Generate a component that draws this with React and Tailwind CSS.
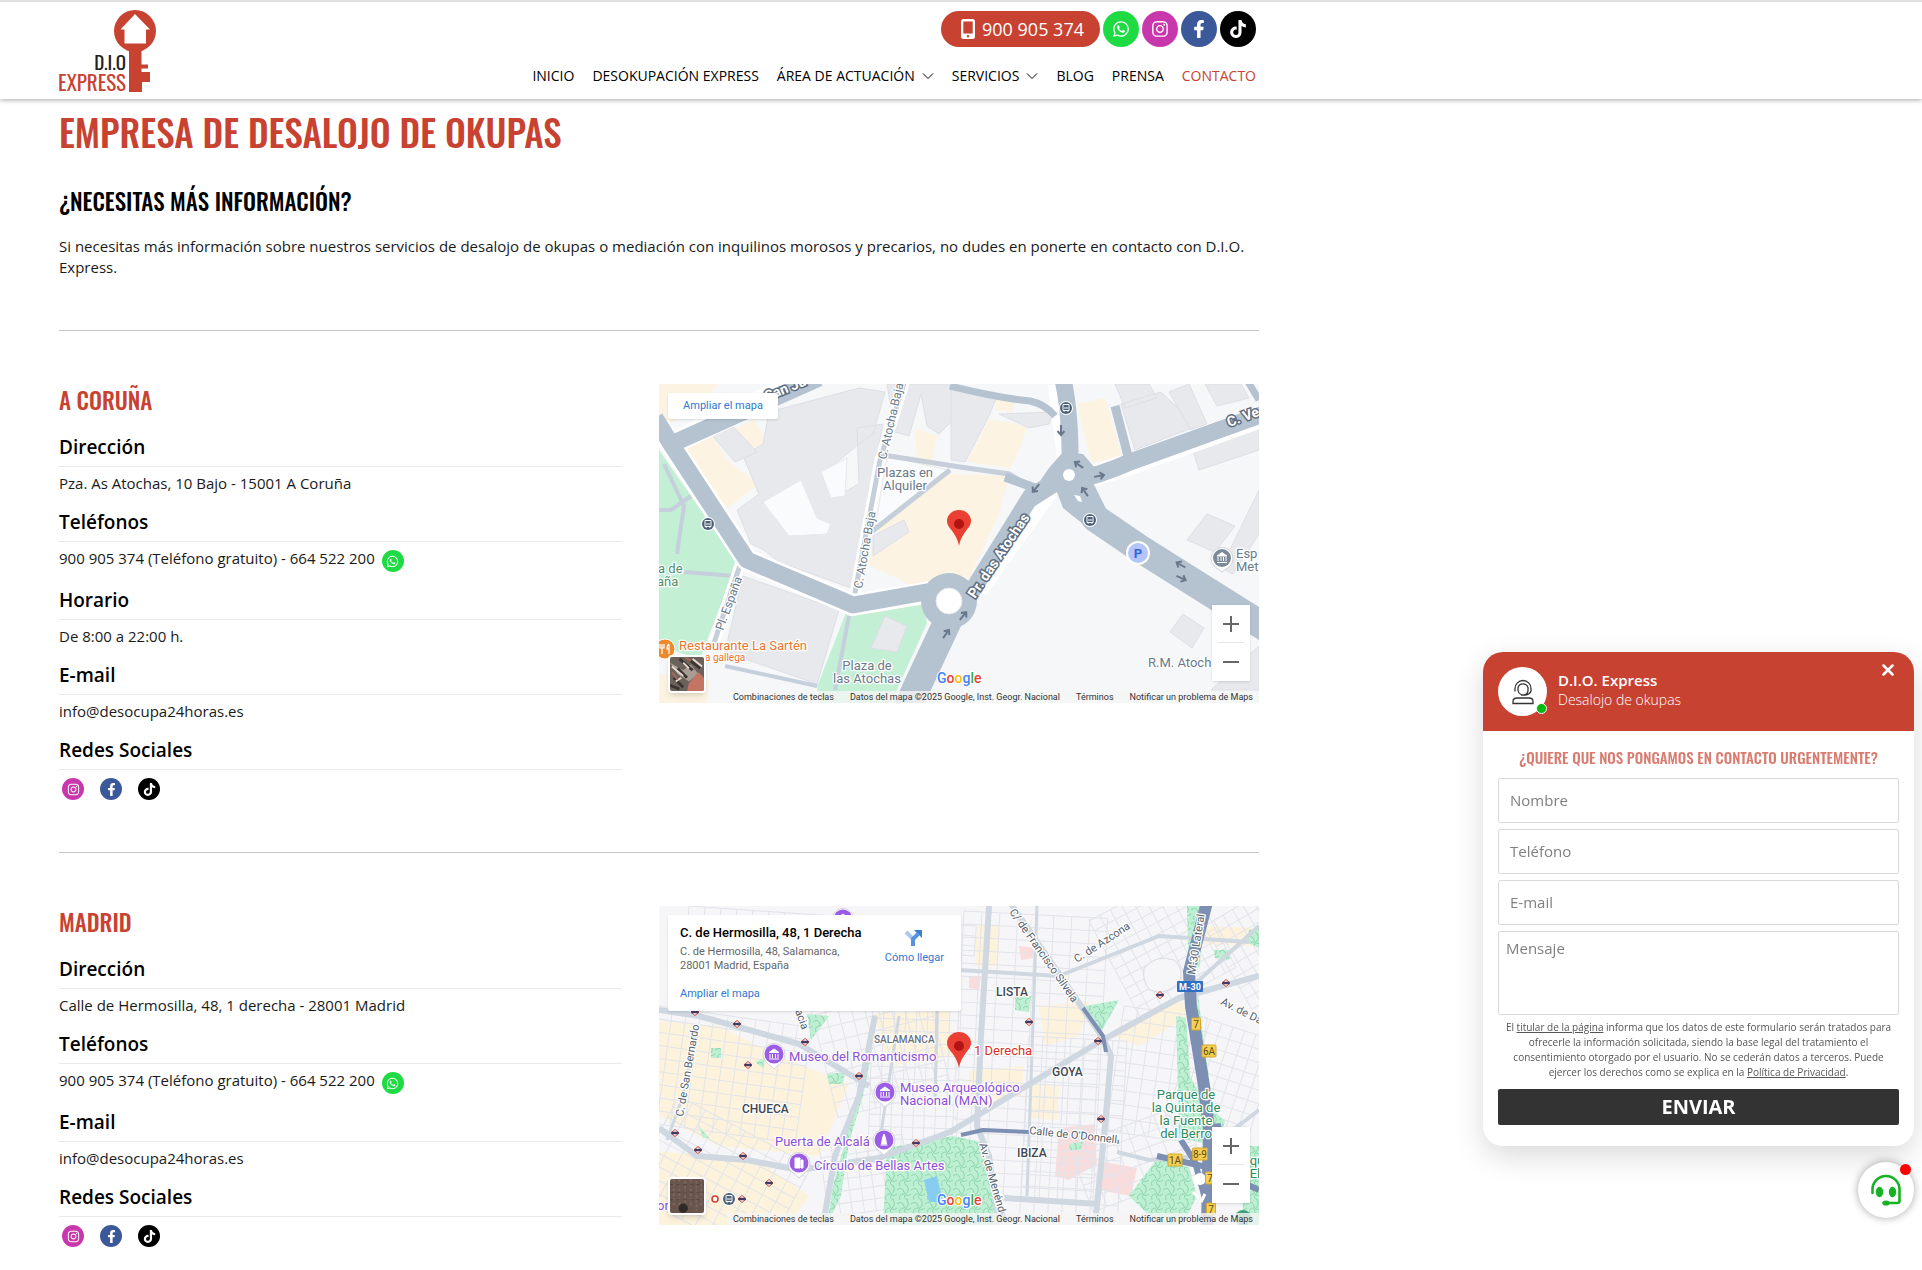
import React from "react";
import { FaWhatsapp, FaInstagram, FaFacebookF, FaTiktok } from "react-icons/fa";

const brands = {
  whatsapp: { Icon: FaWhatsapp, label: "WhatsApp", bg: "bg-[#1fdb43]" },
  instagram: { Icon: FaInstagram, label: "Instagram", bg: "bg-[#c837ab]" },
  facebook: { Icon: FaFacebookF, label: "Facebook", bg: "bg-[#3b5998]" },
  tiktok: { Icon: FaTiktok, label: "TikTok", bg: "bg-black" },
};

function Social({ name, small }) {
  const { Icon, label, bg } = brands[name];
  return (
    <a
      href="#"
      aria-label={label}
      className={`flex items-center justify-center rounded-full text-white ${bg} ${small ? "size-[22px] text-[13px]" : "size-9 text-lg"}`}
    >
      <Icon />
    </a>
  );
}

function Logo() {
  return (
    <svg viewBox="0 0 98 84" className="h-[84px] w-[98px]" role="img" aria-label="D.I.O Express">
      <circle cx="76" cy="22" r="21" fill="#c84232" />
      <path d="M76 5 61.5 20.5h4V34.500h21.500V20.500h4z" fill="#fff" />
      <path d="M70 40h12.500v15.500H89v4h-6.500v3.500H91v10h-8v10H70z" fill="#c84232" />
      <text x="67" y="61" textAnchor="end" fontSize="19" fontFamily="Oswald" fill="#222">D.I.O</text>
      <text x="67" y="82" textAnchor="end" fontSize="21" fontFamily="Oswald" fill="#c84232">EXPRESS</text>
    </svg>
  );
}

function Chevron() {
  return (
    <svg viewBox="0 0 12 8" className="h-2 w-3" fill="none" stroke="currentColor">
      <path d="M1 1.500 6 6.500 11 1.500" />
    </svg>
  );
}

const nav = [
  { label: "INICIO" },
  { label: "DESOKUPACIÓN EXPRESS" },
  { label: "ÁREA DE ACTUACIÓN", menu: true },
  { label: "SERVICIOS", menu: true },
  { label: "BLOG" },
  { label: "PRENSA" },
  { label: "CONTACTO", active: true },
];

function Header() {
  return (
    <header className="relative border-t-2 border-[#dfdfdf] bg-white shadow-[0_1px_5px_rgba(0,0,0,0.35)]">
      <div className="ml-[59px] flex max-w-[1200px] justify-between pt-[7px] pb-[6px]">
        <a href="#"><Logo /></a>
        <div className="flex flex-col items-end pt-0.5 pr-[3px]">
          <div className="flex gap-[3px]">
            <a href="tel:900905374" className="flex h-9 items-center gap-[7px] rounded-full bg-[#c84232] pr-4 pl-5 text-lg text-white">
              <svg viewBox="0 0 14 20" className="h-5 w-3.5">
                <path fillRule="evenodd" fill="#fff" d="M2.500 0h9A2.500 2.500 0 0 1 14 2.500v15a2.500 2.500 0 0 1-2.500 2.500h-9A2.500 2.500 0 0 1 0 17.500v-15A2.500 2.500 0 0 1 2.500 0zM2.300 2.600v12h9.400v-12zM7 16a1.200 1.200 0 1 0 0 2.400A1.200 1.200 0 0 0 7 16z" />
              </svg>
              900 905 374
            </a>
            <Social name="whatsapp" />
            <Social name="instagram" />
            <Social name="facebook" />
            <Social name="tiktok" />
          </div>
          <nav className="mt-[18px] flex gap-[18px] text-sm leading-[22px] text-black">
            {nav.map((n) => (
              <a key={n.label} href="#" className={`flex items-center gap-[7px] ${n.active ? "text-[#c84232]" : ""}`}>
                {n.label}
                {n.menu && <Chevron />}
              </a>
            ))}
          </nav>
        </div>
      </div>
    </header>
  );
}

function Field({ title, children }) {
  return (
    <div className="mb-4">
      <h4 className="border-b border-[#e9e9e9] pb-[7px] text-[19px] leading-6 font-semibold">{title}</h4>
      <div className="pt-1.5 text-[15px] leading-[21px] text-[#1a1a1a]">{children}</div>
    </div>
  );
}

function Phones() {
  return (
    <div className="flex h-[24px] items-start gap-[7px]">
      <span>900 905 374 (Teléfono gratuito) - 664 522 200</span>
      <div className="pt-0.5"><Social name="whatsapp" small /></div>
    </div>
  );
}

function Office({ city, address, hours, map }) {
  return (
    <section className="grid grid-cols-2 border-t border-[#c4c4c4] pt-[53px] pb-9">
      <div className="pr-[37px]">
        <h3 className="mb-[18px] font-['Oswald'] text-[23px] leading-[33px] font-medium text-[#c84232]">{city}</h3>
        <Field title="Dirección">{address}</Field>
        <Field title="Teléfonos"><Phones /></Field>
        {hours && <Field title="Horario">{hours}</Field>}
        <Field title="E-mail">info@desocupa24horas.es</Field>
        <Field title="Redes Sociales">
          <div className="flex gap-4 pt-0.5 pl-[3px]">
            <Social name="instagram" small />
            <Social name="facebook" small />
            <Social name="tiktok" small />
          </div>
        </Field>
      </div>
      {map}
    </section>
  );
}

/* ---------- Maps ---------- */

function Pin() {
  return (
    <g>
      <path d="M300 162c-1.500-7-3-9.500-6.500-14.500-3-4-5.500-6.500-5.500-10.500a12 11 0 0 1 24 0c0 4-2.500 6.500-5.500 10.500-3.500 5-5 7.500-6.500 14.500z" fill="#ea3f33" />
      <circle cx="300" cy="140" r="5" fill="#b31412" />
    </g>
  );
}

function GoogleMark() {
  return (
    <text x="278" y="299" fontSize="14" fontWeight="500" stroke="#fff" strokeWidth="2" paintOrder="stroke">
      <tspan fill="#4285f4">G</tspan>
      <tspan fill="#ea4335">o</tspan>
      <tspan fill="#fbbc04">o</tspan>
      <tspan fill="#4285f4">g</tspan>
      <tspan fill="#34a853">l</tspan>
      <tspan fill="#ea4335">e</tspan>
    </text>
  );
}

function Bus({ x, y }) {
  return (
    <g transform={`translate(${x} ${y})`}>
      <circle r="7" fill="#fff" />
      <circle r="6" fill="#4d6079" />
      <path d="M-3-3.500h6v6h-6zM-2.500 3h1.500M1 3h1.500M-2 0h4" fill="none" stroke="#fff" />
    </g>
  );
}

function Arrow({ x, y, r }) {
  return <path transform={`translate(${x} ${y}) rotate(${r})`} d="M-5 0H4M1-3.500 5 0 1 3.500" fill="none" stroke="#68778a" strokeWidth="2" />;
}

function Halo({ children, ...p }) {
  return (
    <text stroke="#fff" strokeWidth="2.500" strokeLinejoin="round" paintOrder="stroke" {...p}>
      {children}
    </text>
  );
}

function CorunaDrawing() {
  return (
    <svg viewBox="0 0 600 319" preserveAspectRatio="xMidYMid slice" className="block h-full w-full" fontFamily="Roboto" fontSize="13">
      <rect width="600" height="319" fill="#f6f7f9" />
      <g fill="#c3efd5">
        <path d="M0 66 78 178 41 275 0 262z" />
        <path d="M188 226 262 214 268 239 232 319H160L158 303z" />
      </g>
      <g fill="#fdf3e2">
        <path d="M0 0H60L40 20 10 40 0 35zM20 65 52 50 70 78 100 100 60 130z" />
        <path d="M240 88 350 92 340 130 310 195 262 206 208 180z" />
        <path d="M418 20 446 14 464 76 432 78z" />
        <path d="M330 35 368 42 362 62 352 84 308 78zM336 14 356 16 354 28 336 26zM256 44 278 52 272 84 258 76z" />
        <path d="M0 290 50 296 48 319H0zM65 50 95 36 110 60 84 66z" />
      </g>
      <g fill="#e7e9ed" stroke="#dcdfe5">
        <path d="M110 28 200 4 226 8 214 50 200 60 166 88 178 112 200 100 198 44 224 40 192 204 120 178 105 166 92 160 78 126 100 110 84 72 104 60z" />
        <path d="M50 48 70 38 98 68 76 78z" />
        <path d="M84 192 180 226 158 300 66 268z" />
        <path d="M228 0H290L300 30 280 50 268 42 262 10 250 52 236 48z" />
        <path d="M292 2 338 12 330 32 306 78 292 76z" />
        <path d="M340 30 394 28 390 40 370 44z" />
        <path d="M462 20 502 8 538 42 476 66zM456 0H490L498 14 466 24z" />
        <path d="M510 8 530 0 548 40 532 46zM546 0H582L590 14 558 22zM532 60 600 36 600 66 540 86z" />
        <path d="M548 130 576 142 556 168 528 156zM600 106 600 150 574 190 562 184z" />
        <path d="M524 230 545 244 533 264 511 248z" />
        <path d="M214 152 245 136 250 148 214 172zM226 232 248 242 238 268 212 264z" />
        <path d="M600 262V306H552z" />
      </g>
      <g fill="#fafbfc" stroke="#e6e8ec">
        <path d="M104 118 142 96 158 134 172 140 168 150 130 152z" />
        <path d="M162 88 188 74 186 112 172 114z" />
        <path d="M228 72 288 86 216 144z" />
      </g>
      <g fill="none" stroke="#c6cfdc" strokeWidth="4">
        <path d="M5 80 25 122 18 170M0 126H12L32 112M25 188 76 192M190 232 176 306M66 282 158 302" />
      </g>
      <g fill="none" stroke="#fff" strokeWidth="11">
        <path d="M246-4 221 76 195 214M82 178 54 262" />
      </g>
      <g fill="none" stroke="#c5ced9" strokeWidth="5">
        <path d="M246-4 221 76 195 214M82 178 54 262M224 71 301 83 350 90 374 104M291 86 211 149" />
      </g>
      <g fill="none" stroke="#fff" strokeLinejoin="round" strokeWidth="22">
        <path d="M0 42 12 60 88 176 194 221 290 205M12 60 150-6" />
        <path d="M400 0 411 91M420 96 471 80 604 32M318 205 390 104" />
      </g>
      <g fill="none" stroke="#b5c2d0" strokeLinejoin="round" strokeWidth="17">
        <path d="M-4 34 12 60 88 176 194 221 290 204M8 62 160-6" />
        <path d="M404-4Q412 30 411 91M415 96Q440 92 471 78L604 30M310 212 372 112 404 94" />
        <path d="M291 2Q340 14 371 17 386 20 396 32M588-4 600 16" strokeWidth="7" />
        <path d="M456 22 470 76M346 93 376 104" strokeWidth="9" />
        <path d="M418 98 436 134 480 164 620 252" strokeWidth="28" />
        <path d="M294 226 248 324" strokeWidth="28" />
      </g>
      <path d="M390 84 404 68 424 70 436 84 430 104 440 130 424 140 404 124 398 108 376 122 372 110z" fill="#b5c2d0" />
      <circle cx="290" cy="217" r="28" fill="#b5c2d0" />
      <circle cx="290" cy="217" r="13" fill="#fff" stroke="#e2e6eb" />
      <circle cx="410" cy="91" r="6" fill="#fff" />
      <path d="M415 111 421 112 423 118 419 117z" fill="#fff" />
      <Arrow x={402} y={46} r={90} />
      <Arrow x={420} y={81} r={215} />
      <Arrow x={440} y={92} r={-10} />
      <Arrow x={426} y={108} r={235} />
      <Arrow x={377} y={104} r={130} />
      <Arrow x={522} y={181} r={210} />
      <Arrow x={522} y={194} r={25} />
      <Arrow x={304} y={232} r={-50} />
      <Arrow x={287} y={250} r={-55} />
      <Bus x={49} y={140} />
      <Bus x={407} y={24} />
      <Bus x={431} y={136} />
      <circle cx="479" cy="169" r="12" fill="#fff" />
      <circle cx="479" cy="169" r="10" fill="#b3c5fb" />
      <text x="479" y="174" textAnchor="middle" fontWeight="700" fill="#3367d6">P</text>
      <g>
        <path d="M563 188 555 182a11 11 0 1 1 16 0z" fill="#fff" stroke="#cfd4da" />
        <circle cx="563" cy="174" r="9" fill="#7c8a97" />
        <path d="M558 172 563 168.500 568 172zM559 173v4M562 173v4M564.500 173v4M567 173v4M558 178.500h10" fill="#fff" stroke="#fff" />
      </g>
      <g fill="#6b7a89">
        <Halo x="246" y="93" textAnchor="middle">Plazas en</Halo>
        <Halo x="246" y="106" textAnchor="middle">Alquiler</Halo>
        <Halo x="208" y="286" textAnchor="middle">Plaza de</Halo>
        <Halo x="208" y="299" textAnchor="middle">las Atochas</Halo>
        <Halo x="577" y="174">Esp</Halo>
        <Halo x="577" y="187">Met</Halo>
        <Halo x="489" y="283">R.M. Atoch</Halo>
        <Halo transform="translate(227 76) rotate(-77)" fontSize="12">C. Atocha Baja</Halo>
        <Halo transform="translate(203 205) rotate(-80)" fontSize="12">C. Atocha Baja</Halo>
        <Halo transform="translate(64 247) rotate(-70)" fontSize="12">Pl. España</Halo>
      </g>
      <g fill="#4e8f6d">
        <Halo x="-1" y="189">a de</Halo>
        <Halo x="-2" y="202">aña</Halo>
      </g>
      <g fill="#fff">
        <text transform="translate(316 215) rotate(-56)" fontSize="14" fontWeight="700" stroke="#5d6c7f" strokeWidth="3" paintOrder="stroke">Pr. das Atochas</text>
        <text transform="translate(570 43) rotate(-20)" fontSize="14" fontWeight="700" stroke="#5d6c7f" strokeWidth="3" paintOrder="stroke">C. Ve</text>
        <text transform="translate(108 17) rotate(-22)" fontSize="14" fontWeight="700" stroke="#5d6c7f" strokeWidth="3" paintOrder="stroke">San Ju</text>
      </g>
      <circle cx="6" cy="265" r="10" fill="#ee8a2c" stroke="#fff" />
      <path d="M3 260v10M1 260v4h4v-4M10 260v10M10 260q-2 1-2 5h2" fill="none" stroke="#fff" strokeWidth="1.200" />
      <g fill="#e8762d">
        <Halo x="20" y="266">Restaurante La Sartén</Halo>
        <Halo x="46" y="277" fontSize="10">a gallega</Halo>
      </g>
      <Pin />
      <GoogleMark />
    </svg>
  );
}

function Poi({ x, y, kind = 0 }) {
  const glyphs = [
    "M-5-1.500 0-5 5-1.500zM-4 0v4M-1.500 0v4M1.500 0v4M4 0v4M-5 5H5",
    "M0-6-1.500-2-2.500 4H2.500L1.500-2zM-3.500 5h7",
    "M-4-5H1V5H-4zM2-3H4V5H2z",
  ];
  return (
    <g transform={`translate(${x} ${y})`}>
      <path d="M0 15-8 8a11 11 0 1 1 16 0z" fill="#fff" stroke="#d5d2e0" />
      <circle r="9.500" fill="#9b5de5" />
      <path d={glyphs[kind]} fill="#fff" stroke="#fff" />
    </g>
  );
}

function Metro({ x, y }) {
  return (
    <g transform={`translate(${x} ${y})`}>
      <path d="M0-3.500 4 0 0 3.500-4 0z" fill="#fff" stroke="#d23f31" />
      <path d="M-3.500 0h7" stroke="#3f3a63" strokeWidth="2.500" />
    </g>
  );
}

function Exit({ x, y, w = 9, children }) {
  return (
    <g>
      <rect x={x - w / 2} y={y - 6} width={w} height="12" rx="1" fill="#f7cf52" stroke="#d5a92b" />
      <text x={x} y={y + 4} fontSize="10" textAnchor="middle" fill="#5a4a1a">{children}</text>
    </g>
  );
}

/* Fine street grids, each one [x, y, columns, rows, column step, row step, rotation]. */
const grids = [
  [0, 100, 11, 9, 14, 13, 8],
  [150, 95, 9, 8, 13, 15, -14],
  [20, 190, 10, 9, 15, 12, 28],
  [214, 100, 8, 13, 11, 12, 2],
  [305, 5, 8, 22, 18, 13, 3],
  [370, 130, 7, 12, 14, 15, 3],
  [430, 15, 9, 10, 12, 11, -28],
  [465, 100, 6, 9, 14, 14, 8],
  [545, 20, 6, 8, 11, 12, -30],
  [540, 110, 7, 9, 12, 13, 18],
  [30, 0, 18, 3, 16, 10, 4],
  [160, 240, 7, 6, 12, 12, -8],
  [410, 240, 8, 5, 15, 14, -20],
];

function gridPath([, , cols, rows, dx, dy]) {
  let d = "";
  for (let i = 0; i <= cols; i++) d += `M${i * dx} 0V${rows * dy}`;
  for (let j = 0; j <= rows; j++) d += `M0 ${j * dy}H${cols * dx}`;
  return d;
}

function MadridDrawing() {
  return (
    <svg viewBox="0 0 600 319" preserveAspectRatio="xMidYMid slice" className="block h-full w-full" fontFamily="Roboto" fontSize="13">
      <defs>
        <pattern id="park" width="14" height="14" patternUnits="userSpaceOnUse">
          <rect width="14" height="14" fill="#bdf0d2" />
          <path d="M0 4q5-4 7 2t7 2M3 14q-2-6 4-6M10 0q3 4-1 8t2 6" fill="none" stroke="#8ed3ae" />
        </pattern>
      </defs>
      <rect width="600" height="319" fill="#f6f6f9" />
      <g fill="#fdf2dc">
        <path d="M0 115 60 120 120 150 190 178 160 250 60 240 0 210z" />
        <path d="M0 245 100 255 150 290 130 319H0zM70 180 130 170 150 220 90 225z" />
        <path d="M215 108 290 105 294 150 230 160zM310 165 365 160 362 190 310 198zM318 20 340 18 338 60 316 60z" />
        <path d="M380 100 430 96 420 130 386 140zM455 130 520 90 530 110 480 140zM540 20 600 22 595 40 545 38zM370 178 400 180 398 214 372 212z" />
      </g>
      <g fill="#fbdcdc">
        <path d="M400 222 435 218 438 258 410 274 396 270zM440 255 478 262 472 290 440 284zM360 40 376 42 374 52 362 54zM310 70 322 70 320 84 310 82z" />
      </g>
      {grids.map((g, i) => (
        <g key={i} transform={`translate(${g[0]} ${g[1]}) rotate(${g[6]})`}>
          <path d={gridPath(g)} fill="none" stroke="#e2e4ea" />
        </g>
      ))}
      <path d="M485 62q12-14 30-8 12 10 4 24-14 12-28 6-8-8-6-22z" fill="#f6f6f9" stroke="#d8dce3" />
      <g fill="url(#park)">
        <path d="M228 242 294 230 322 236 340 319H224z" />
        <path d="M426 100 460 94 442 126z" />
        <path d="M517 110 527 112 531 170 545 196 566 215 560 240 520 232z" />
        <path d="M590 24 600 22V42L588 36zM528 0H543L541 60 530 70zM538 80 544 130 550 170 540 150z" />
        <path d="M214 140 204 190 190 236 182 290 168 319 174 280 190 220 202 170z" />
        <path d="M470 290 500 250 530 262 538 290 524 319H500zM580 240H600V319H585z" />
        <path d="M168 168 186 166 184 178 170 178zM148 108 170 110 152 134zM52 142 62 142 62 152 52 152zM96 156 106 152 104 162zM40 220 50 232 44 232z" />
        <path d="M356 90 372 90 370 106 356 104zM410 238 424 236 422 244 410 244zM555 44 572 44 570 54 556 52z" />
      </g>
      <path d="M265 274 278 270 284 296 270 296z" fill="#86cdf0" />
      <g fill="none" stroke="#cfd7e0" strokeWidth="6" strokeLinejoin="round">
        <path d="M0 104 40 110 140 138 210 180M0 222 38 250 88 254 140 264 220 252 291 226 440 136 520 92 600 70" />
        <path d="M330 0 322 130 318 220 330 250 340 319M216 110 200 190 176 250 164 319" />
        <path d="M350-5 444 132 452 150 446 220 436 319M345 292 440 298" />
        <path d="M300 64 400 70 500 30 590 36M458 246 490 254 540 250 600 204M538 76 600 20" strokeWidth="4" />
        <path d="M38 120 24 190 8 234M378 0 368 290M278 100 276 200M240 110 220 240" strokeWidth="3" />
      </g>
      <g fill="none" stroke="#7d90b4" strokeLinejoin="round">
        <path d="M548-4 530 66 532 100 545 180 550 224 548 319" strokeWidth="12" />
        <path d="M424 102 444 130 447 146M302 229 324 224 370 226M452 235 460 236" strokeWidth="4" />
        <path d="M498 250 552 262 600 284M522 234 536 256 548 300M545 222 562 220" strokeWidth="6" />
      </g>
      <circle cx="541" cy="273" r="6" fill="#fff" />
      <path d="M534 286l6 6M546 288l-4 8" stroke="#fff" strokeWidth="3" />
      <Metro x={36} y={106} /><Metro x={78} y={118} /><Metro x={146} y={136} /><Metro x={89} y={159} /><Metro x={200} y={170} />
      <Metro x={16} y={227} /><Metro x={39} y={244} /><Metro x={84} y={250} /><Metro x={110} y={277} /><Metro x={83} y={293} />
      <Metro x={257} y={237} /><Metro x={370} y={116} /><Metro x={439} y={135} /><Metro x={442} y={213} /><Metro x={501} y={89} /><Metro x={567} y={77} />
      <Bus x={70} y={293} />
      <circle cx="56" cy="293" r="3" fill="#fff" stroke="#d23f31" strokeWidth="1.500" />
      <rect x="518" y="75" width="26" height="11" rx="1" fill="#2f6fc4" />
      <text x="531" y="84" fontSize="9" fontWeight="700" textAnchor="middle" fill="#fff">M-30</text>
      <Exit x={537} y={118}>7</Exit>
      <Exit x={550} y={145} w={14}>6A</Exit>
      <Exit x={516} y={254} w={14}>1A</Exit>
      <Exit x={541} y={248} w={15}>8-9</Exit>
      <Exit x={551} y={272}>7</Exit>
      <Exit x={552} y={303}>7</Exit>
      <Poi x={184} y={13} />
      <Poi x={115} y={148} />
      <Poi x={226} y={186} />
      <Poi x={225} y={234} kind={1} />
      <Poi x={140} y={257} kind={2} />
      <g fill="#8e4fd6">
        <Halo x="130" y="155">Museo del Romanticismo</Halo>
        <Halo x="241" y="186">Museo Arqueológico</Halo>
        <Halo x="241" y="199">Nacional (MAN)</Halo>
        <Halo x="116" y="240">Puerta de Alcalá</Halo>
        <Halo x="155" y="264">Círculo de Bellas Artes</Halo>
        <Halo x="-2" y="304">or</Halo>
      </g>
      <g fill="#3f4650" fontWeight="500" fontSize="12">
        <Halo x="83" y="207">CHUECA</Halo>
        <Halo x="337" y="90">LISTA</Halo>
        <Halo x="393" y="170">GOYA</Halo>
        <Halo x="358" y="251">IBIZA</Halo>
        <Halo x="215" y="137" fontSize="10" fill="#66707c">SALAMANCA</Halo>
      </g>
      <g fill="#2f8a5f" textAnchor="middle">
        <Halo x="527" y="193">Parque de</Halo>
        <Halo x="527" y="206">la Quinta de</Halo>
        <Halo x="527" y="219">la Fuente</Halo>
        <Halo x="527" y="232">del Berro</Halo>
        <Halo x="598" y="259">qu</Halo>
        <Halo x="596" y="272">El</Halo>
      </g>
      <g fill="#56606e" fontSize="11">
        <Halo transform="translate(24 211) rotate(-80)">C. de San Bernardo</Halo>
        <Halo transform="translate(350 6) rotate(55)">C/ de Francisco Silvela</Halo>
        <Halo transform="translate(418 57) rotate(-33)">C. de Azcona</Halo>
        <Halo transform="translate(536 69) rotate(-81)">M-30 Lateral</Halo>
        <Halo transform="translate(561 98) rotate(27)">Av. de Da</Halo>
        <Halo transform="translate(370 228) rotate(6)">Calle de O'Donnell</Halo>
        <Halo transform="translate(320 238) rotate(74)">Av. de Menéndez</Halo>
        <Halo transform="translate(136 105) rotate(70)">acia</Halo>
      </g>
      <Halo x="315" y="149" fill="#d93025">1 Derecha</Halo>
      <circle cx="584" cy="312" r="8" fill="#3ea07a" />
      <Pin />
      <GoogleMark />
    </svg>
  );
}

function CorunaThumb() {
  return (
    <svg viewBox="0 0 36 36" className="size-full">
      <rect width="36" height="36" fill="#6b625c" />
      <path d="M0 6 14 14 22 8 30 18 20 26 8 18z" fill="#a89c94" />
      <path d="M20 28 30 16 36 22V36H18z" fill="#c47463" />
      <path d="M4 22 14 32M10 2 24 14M0 30 10 34M8 12 18 22M22 4 32 12" stroke="#3a3532" strokeWidth="3" />
      <path d="M2 10 14 20M24 2 34 10M6 26 12 22M14 6 20 12" stroke="#e3d9d0" strokeWidth="2" />
      <path d="M2 16 8 24M16 0 22 4" stroke="#a8685a" strokeWidth="2" />
    </svg>
  );
}

function MadridThumb() {
  return (
    <svg viewBox="0 0 36 36" className="size-full">
      <rect width="36" height="36" fill="#6a554c" />
      <path d="M4 0V30M10 0V34M16 2V30M22 0V28M28 2V34M33 0V30" stroke="#7b6760" strokeDasharray="3 2" strokeWidth="2" />
      <path d="M0 6H36M0 14H36M0 22H36" stroke="#54453f" strokeDasharray="4 3" />
      <circle cx="14" cy="31" r="5" fill="#2f2b28" />
    </svg>
  );
}

function MapFrame({ drawing, thumb, card }) {
  return (
    <div className="relative h-[319px] overflow-hidden font-['Roboto']">
      {drawing}
      {card}
      <button aria-label="Vista satélite" className="absolute bottom-2.5 left-[9px] size-[38px] overflow-hidden rounded-sm border-2 border-white shadow-md">
        {thumb}
      </button>
      <div className="absolute right-[9px] bottom-[22px] flex w-[38px] flex-col bg-white px-1.5 text-[#666] shadow">
        <button aria-label="Ampliar" className="flex h-[38px] items-center justify-center border-b border-[#e6e6e6]">
          <svg viewBox="0 0 16 16" className="size-4"><path d="M8 0V16M0 8H16" stroke="currentColor" strokeWidth="2" /></svg>
        </button>
        <button aria-label="Reducir" className="flex h-[38px] items-center justify-center">
          <svg viewBox="0 0 16 16" className="size-4"><path d="M0 8H16" stroke="currentColor" strokeWidth="2" /></svg>
        </button>
      </div>
      <div className="absolute right-0 bottom-0 flex h-3 items-center gap-4 bg-[#f5f5f5]/80 px-1.5 text-[9px] leading-3 whitespace-nowrap text-[#333]">
        <button>Combinaciones de teclas</button>
        <span>Datos del mapa ©2025 Google, Inst. Geogr. Nacional</span>
        <a href="#">Términos</a>
        <a href="#">Notificar un problema de Maps</a>
      </div>
    </div>
  );
}

function CorunaCard() {
  return (
    <a href="#" className="absolute top-[9px] left-[9px] flex h-[26px] w-[110px] items-center justify-center rounded-xs bg-white text-[11px] text-[#2f78d0] shadow">
      Ampliar el mapa
    </a>
  );
}

function MadridCard() {
  return (
    <div className="absolute top-[9px] left-[9px] flex h-24 w-[293px] justify-between rounded-xs bg-white pt-2.5 pr-[17px] pl-3 shadow">
      <div>
        <p className="text-[13px] leading-4 font-medium text-black">C. de Hermosilla, 48, 1 Derecha</p>
        <p className="mt-1 text-[11px] leading-[14px] text-[#666]">C. de Hermosilla, 48, Salamanca,<br />28001 Madrid, España</p>
        <a href="#" className="mt-3.5 block text-[11px] leading-[14px] text-[#2f78d0]">Ampliar el mapa</a>
      </div>
      <a href="#" className="flex flex-col items-center pt-1 text-[11px] leading-[14px] text-[#2f78d0]">
        <svg viewBox="0 0 18 18" className="mb-1 size-[18px]">
          <path d="M1 3 8 10" stroke="#a9c7ef" strokeWidth="4" />
          <path d="M8 17V10L13 5" fill="none" stroke="#5594dd" strokeWidth="4" />
          <path d="M9 1H17V9z" fill="#3f7fd0" />
        </svg>
        Cómo llegar
      </a>
    </div>
  );
}

/* ---------- Chat widget ---------- */

function ChatWidget() {
  const input = "block h-[45px] w-full rounded-xs border border-[#d9d9d9] px-[11px] pb-0.5 text-[15px] placeholder-[#808080]";
  return (
    <aside className="fixed right-2 bottom-[124px] w-[431px] overflow-hidden rounded-[20px] bg-white shadow-[0_10px_30px_rgba(0,0,0,0.15)]">
      <div className="flex h-[79px] items-center gap-[11px] bg-[#c84232] px-[15px] text-white">
        <div className="relative flex size-[49px] items-center justify-center rounded-full bg-white">
          <svg viewBox="0 0 24 26" className="h-[26px] w-6" fill="none" stroke="#333" strokeWidth="1.300" strokeLinecap="round">
            <path d="M4 12V9.500a8 8 0 0 1 16 0V12M7 8.500a5.300 5.300 0 0 1 10 0v3a5 5 0 0 1-4 4.500h-2.500M7 8.500v3q.5 3 3 4M20 12q-1 3.500-6 4" />
            <path d="M2 24.500v-2q0-3.500 4-3.500h12q4 0 4 3.500v2z" />
          </svg>
          <span className="absolute right-0 bottom-0.5 size-[11px] rounded-full border border-white bg-[#00b80c]" />
        </div>
        <div className="pb-[3px] leading-5">
          <p className="text-[15px] font-semibold">D.I.O. Express</p>
          <p className="text-sm font-light">Desalojo de okupas</p>
        </div>
        <button aria-label="Cerrar" className="mt-2.5 mr-[3px] ml-auto flex size-4 items-center justify-center self-start">
          <svg viewBox="0 0 12 12" className="size-3" stroke="#fff" strokeWidth="2.500" strokeLinecap="round"><path d="M1.500 1.500l9 9M10.500 1.500l-9 9" /></svg>
        </button>
      </div>
      <form className="px-[15px] pt-3.5 pb-[21px]" onSubmit={(e) => e.preventDefault()}>
        <h2 className="mb-[9px] text-center font-['Oswald'] text-[15px] leading-6 font-medium text-[#d97b6f]">¿QUIERE QUE NOS PONGAMOS EN CONTACTO URGENTEMENTE?</h2>
        <div className="flex flex-col gap-1.5">
          <input aria-label="Nombre" placeholder="Nombre" className={input} />
          <input aria-label="Teléfono" placeholder="Teléfono" className={input} />
          <input aria-label="E-mail" placeholder="E-mail" className={input} />
          <textarea aria-label="Mensaje" placeholder="Mensaje" className="block h-[84px] w-full resize-none rounded-xs border border-[#d9d9d9] px-[7px] py-1.5 text-[15px] leading-5 placeholder-[#808080]" />
        </div>
        <p className="mt-[5px] mb-[9px] text-center text-[10px] leading-[15px] text-[#555]">
          El <a href="#" className="underline">titular de la página</a> informa que los datos de este formulario serán tratados para ofrecerle la información solicitada, siendo la base legal del tratamiento el consentimiento otorgado por el usuario. No se cederán datos a terceros. Puede ejercer los derechos como se explica en la <a href="#" className="underline">Política de Privacidad</a>.
        </p>
        <button className="block h-9 w-full rounded-xs bg-[#333] text-xl leading-9 font-bold text-white">ENVIAR</button>
      </form>
    </aside>
  );
}

function ChatButton() {
  return (
    <button aria-label="Abrir chat" className="fixed right-2 bottom-[52px] flex size-14 items-center justify-center rounded-full bg-white shadow-[0_0_8px_rgba(0,0,0,0.35)]">
      <svg viewBox="0 0 32 32" className="size-8" fill="none" stroke="#18b324" strokeLinecap="round" strokeLinejoin="round">
        <path d="M2.500 19V15.500a13.500 13.500 0 0 1 27 0V27q0 2-2 2H18" strokeWidth="2.600" />
        <ellipse cx="9.500" cy="18" rx="2.700" ry="4.200" fill="#18b324" strokeWidth="2" />
        <ellipse cx="22.500" cy="18" rx="2.700" ry="4.200" fill="#18b324" strokeWidth="2" />
        <ellipse cx="16" cy="29" rx="3" ry="1.800" fill="#18b324" strokeWidth="1.500" />
      </svg>
      <span className="absolute top-0.5 right-[3px] size-[11px] rounded-full bg-[#f00]" />
    </button>
  );
}

export default function App() {
  return (
    <div className="h-screen overflow-hidden bg-white font-['Open_Sans',sans-serif] text-black">
      <Header />
      <main className="ml-[59px] max-w-[1200px] pt-[9px]">
        <h1 className="font-['Oswald'] text-[37px] leading-[48px] font-medium text-[#c84232]">EMPRESA DE DESALOJO DE OKUPAS</h1>
        <h2 className="mt-[27px] font-['Oswald'] text-[23px] leading-9 font-medium">¿NECESITAS MÁS INFORMACIÓN?</h2>
        <p className="mt-[17px] mb-[52px] text-[15px] leading-[21px] text-[#1a1a1a]">
          Si necesitas más información sobre nuestros servicios de desalojo de okupas o mediación con inquilinos morosos y precarios, no dudes en ponerte en contacto con D.I.O. Express.
        </p>
        <Office
          city="A CORUÑA"
          address="Pza. As Atochas, 10 Bajo - 15001 A Coruña"
          hours="De 8:00 a 22:00 h."
          map={<MapFrame drawing={<CorunaDrawing />} thumb={<CorunaThumb />} card={<CorunaCard />} />}
        />
        <Office
          city="MADRID"
          address="Calle de Hermosilla, 48, 1 derecha - 28001 Madrid"
          map={<MapFrame drawing={<MadridDrawing />} thumb={<MadridThumb />} card={<MadridCard />} />}
        />
      </main>
      <ChatWidget />
      <ChatButton />
    </div>
  );
}
